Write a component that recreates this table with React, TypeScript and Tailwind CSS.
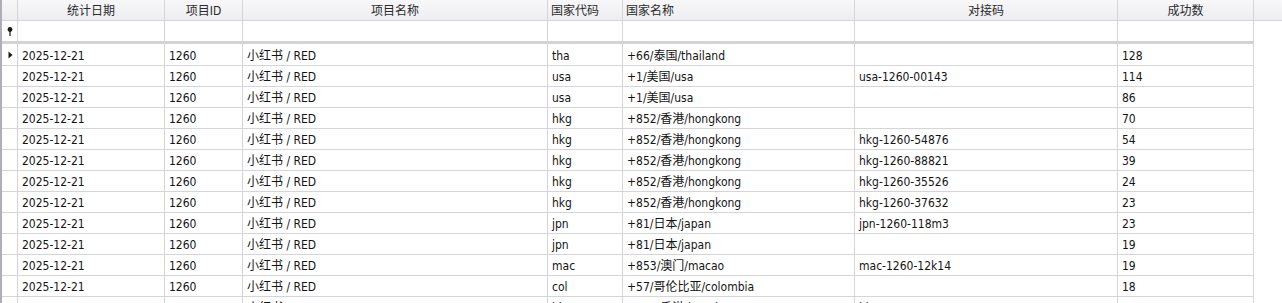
import React from "react";

interface StatRow {
  date: string;
  projectId: string;
  project: string;
  code: string;
  country: string;
  bind: string;
  count: string;
}

const rows: StatRow[] = [
  { date: "2025-12-21", projectId: "1260", project: "小红书 / RED", code: "tha", country: "+66/泰国/thailand", bind: "", count: "128" },
  { date: "2025-12-21", projectId: "1260", project: "小红书 / RED", code: "usa", country: "+1/美国/usa", bind: "usa-1260-00143", count: "114" },
  { date: "2025-12-21", projectId: "1260", project: "小红书 / RED", code: "usa", country: "+1/美国/usa", bind: "", count: "86" },
  { date: "2025-12-21", projectId: "1260", project: "小红书 / RED", code: "hkg", country: "+852/香港/hongkong", bind: "", count: "70" },
  { date: "2025-12-21", projectId: "1260", project: "小红书 / RED", code: "hkg", country: "+852/香港/hongkong", bind: "hkg-1260-54876", count: "54" },
  { date: "2025-12-21", projectId: "1260", project: "小红书 / RED", code: "hkg", country: "+852/香港/hongkong", bind: "hkg-1260-88821", count: "39" },
  { date: "2025-12-21", projectId: "1260", project: "小红书 / RED", code: "hkg", country: "+852/香港/hongkong", bind: "hkg-1260-35526", count: "24" },
  { date: "2025-12-21", projectId: "1260", project: "小红书 / RED", code: "hkg", country: "+852/香港/hongkong", bind: "hkg-1260-37632", count: "23" },
  { date: "2025-12-21", projectId: "1260", project: "小红书 / RED", code: "jpn", country: "+81/日本/japan", bind: "jpn-1260-118m3", count: "23" },
  { date: "2025-12-21", projectId: "1260", project: "小红书 / RED", code: "jpn", country: "+81/日本/japan", bind: "", count: "19" },
  { date: "2025-12-21", projectId: "1260", project: "小红书 / RED", code: "mac", country: "+853/澳门/macao", bind: "mac-1260-12k14", count: "19" },
  { date: "2025-12-21", projectId: "1260", project: "小红书 / RED", code: "col", country: "+57/哥伦比亚/colombia", bind: "", count: "18" },
  { date: "2025-12-21", projectId: "1260", project: "小红书 / RED", code: "hkg", country: "+852/香港/hongkong", bind: "hkg-1260-61007", count: "17" },
];

// column widths incl. right border
const W = ["w-[147px]", "w-[78px]", "w-[305px]", "w-[75px]", "w-[232px]", "w-[263px]", "w-[136px]"];

const headers: { label: string; align: string }[] = [
  { label: "统计日期", align: "justify-center" },
  { label: "项目ID", align: "justify-center" },
  { label: "项目名称", align: "justify-center" },
  { label: "国家代码", align: "justify-start pl-[3px]" },
  { label: "国家名称", align: "justify-start pl-[3px]" },
  { label: "对接码", align: "justify-center" },
  { label: "成功数", align: "justify-center" },
];

const FilterPin = () => (
  <svg width="6" height="9" viewBox="0 0 6 9" className="block">
    <circle cx="3" cy="2.5" r="2.4" fill="#1a1a1a" />
    <rect x="2.4" y="4" width="1.2" height="5" fill="#1a1a1a" />
  </svg>
);

const Arrow = () => (
  <svg width="5" height="8" viewBox="0 0 5 8" className="block">
    <path d="M0.5 0.5 L4.5 4 L0.5 7.5 Z" fill="#1a1a1a" />
  </svg>
);

export default function App() {
  return (
    <div
      className="relative w-[1282px] h-[303px] overflow-hidden bg-white text-[12px] text-[#141414] leading-none"
      style={{ fontFamily: '"DejaVu Sans Condensed", "DejaVu Sans", "Noto Sans CJK SC", sans-serif' }}
    >
      <div className="flex h-full">
        <div className="w-[2px] shrink-0 bg-[#aeaeb6]" />
        <div className="flex flex-col flex-1 min-h-0">
          {/* header */}
          <div className="flex shrink-0 h-[21px] border-b border-[#d4d4da] bg-gradient-to-b from-[#f8f8fa] to-[#eeeef2] text-[#2a2a2a]">
            <div className="w-[16px] border-r border-[#d4d4da]" />
            {headers.map((h, i) => (
              <div key={h.label} className={`${W[i]} flex items-center pt-[1px] ${h.align} border-r border-[#d4d4da]`}>
                {h.label}
              </div>
            ))}
            <div className="flex-1" />
          </div>

          {/* filter row */}
          <div className="flex shrink-0 h-[20px]">
            <div className="w-[16px] flex items-center justify-center border-r border-[#d4d4da] pl-[1px]">
              <FilterPin />
            </div>
            {W.map((w, i) => (
              <div key={i} className={`${w} border-r border-[#d4d4da]`} />
            ))}
          </div>
          <div className="shrink-0 w-[1252px] h-[3px] bg-[#d2d2d8]" />

          {/* data rows */}
          {rows.map((r, idx) => {
            const cells = [r.date, r.projectId, r.project, r.code, r.country, r.bind, r.count];
            return (
              <div
                key={idx}
                className={`flex shrink-0 w-[1252px] ${idx === 0 ? "h-[22px]" : "h-[21px]"} border-b border-[#d4d4da]`}
              >
                <div className="w-[16px] flex items-center justify-center border-r border-[#d4d4da] pl-[1px]">
                  {idx === 0 && <Arrow />}
                </div>
                {cells.map((c, i) => (
                  <div
                    key={i}
                    className={`${W[i]} flex items-center pl-[4px] pt-[2px] border-r border-[#d4d4da] whitespace-nowrap overflow-hidden`}
                  >
                    {c}
                  </div>
                ))}
              </div>
            );
          })}
        </div>
      </div>
    </div>
  );
}
